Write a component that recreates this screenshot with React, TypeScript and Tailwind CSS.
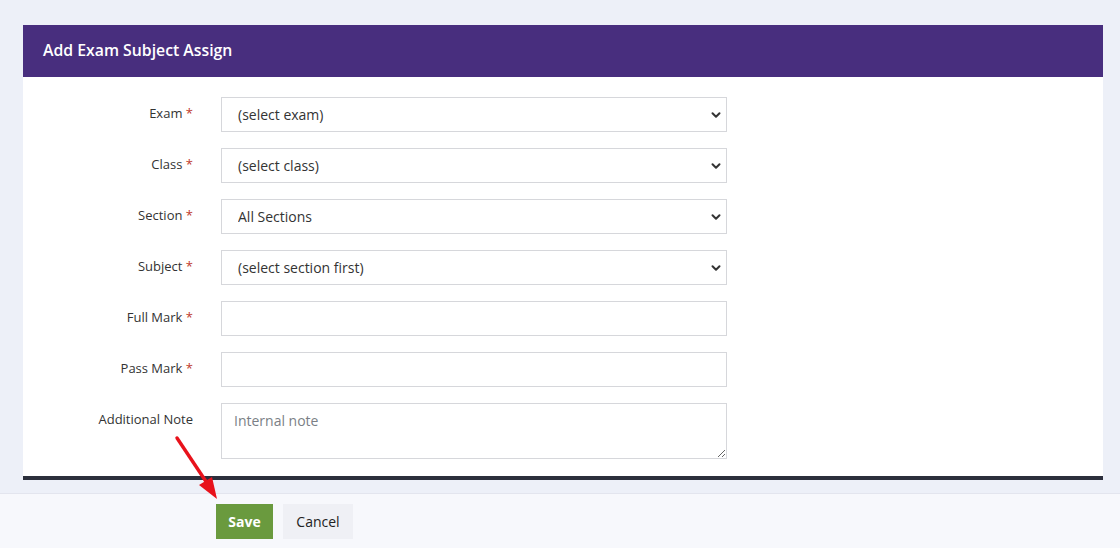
import React from "react";

const fields = [
  { label: "Exam", type: "select", value: "(select exam)" },
  { label: "Class", type: "select", value: "(select class)" },
  { label: "Section", type: "select", value: "All Sections" },
  { label: "Subject", type: "select", value: "(select section first)" },
  { label: "Full Mark", type: "input" },
  { label: "Pass Mark", type: "input" },
];

function Chevron() {
  return (
    <svg className="pointer-events-none absolute right-[6px] top-1/2 -translate-y-1/2 w-[10px] h-[10px]" viewBox="0 0 10 10" fill="none">
      <path d="M1.5 3.2 5 6.7l3.5-3.5" stroke="#333" strokeWidth="2" strokeLinecap="round" strokeLinejoin="round" />
    </svg>
  );
}

export default function App() {
  return (
    <div className="relative min-h-screen bg-[#edf0f8] flex flex-col pt-[25px]" style={{ fontFamily: '"Open Sans", "Liberation Sans", sans-serif' }}>
      <div className="ml-[23px] w-[1080px] bg-white border-b-4 border-[#2c2f3c]">
        <div className="h-[52px] bg-[#482e7e] flex items-center px-5">
          <h1 className="text-white text-[15.8px] font-semibold">Add Exam Subject Assign</h1>
        </div>

        <div className="pt-5 pb-[17px] flex flex-col gap-4">
          {fields.map((f) => (
            <div key={f.label} className="flex items-start">
              <label className="w-[170px] text-right text-[13px] leading-5 pt-[6px] text-[#333]">
                {f.label} <span className="text-[#c0392b]">*</span>
              </label>
              <div className="ml-[28px] w-[506px] relative">
                {f.type === "select" ? (
                  <>
                    <select
                      defaultValue={f.value}
                      className="appearance-none w-full h-[35px] border border-[#d6d7db] bg-white pl-4 text-sm text-[#333] outline-none"
                    >
                      <option>{f.value}</option>
                    </select>
                    <Chevron />
                  </>
                ) : (
                  <input className="w-full h-[35px] border border-[#d6d7db] bg-white px-4 text-sm text-[#333] outline-none" />
                )}
              </div>
            </div>
          ))}
          <div className="flex items-start">
            <label className="w-[170px] text-right text-[13px] leading-5 pt-[6px] text-[#333]">Additional Note</label>
            <div className="ml-[28px] w-[506px]">
              <textarea
                placeholder="Internal note"
                className="block w-full h-[56px] border border-[#d6d7db] bg-white px-3 py-[7px] text-sm text-[#333] placeholder:text-[#7b7f86] outline-none"
              />
            </div>
          </div>
        </div>
      </div>

      <div className="mt-[13px] flex-1 bg-[#f7f8fc] border-t border-[#e3e5ee] pt-[10px] pb-[9px] pl-[216px] flex items-start gap-[10px]">
        <button className="h-[35px] w-[57px] bg-[#6a9a3e] text-white text-sm font-bold">Save</button>
        <button className="h-[35px] w-[70px] bg-[#eff0f5] text-[#222] text-sm">Cancel</button>
      </div>

      <svg className="absolute left-[170px] top-[432px] w-[55px] h-[72px]" viewBox="0 0 55 72" fill="none">
        <path d="M7 6 L37 51" stroke="#e8121b" strokeWidth="3.4" strokeLinecap="round" />
        <path d="M47 67 L29 53 L42 45 Z" fill="#e8121b" />
      </svg>
    </div>
  );
}
